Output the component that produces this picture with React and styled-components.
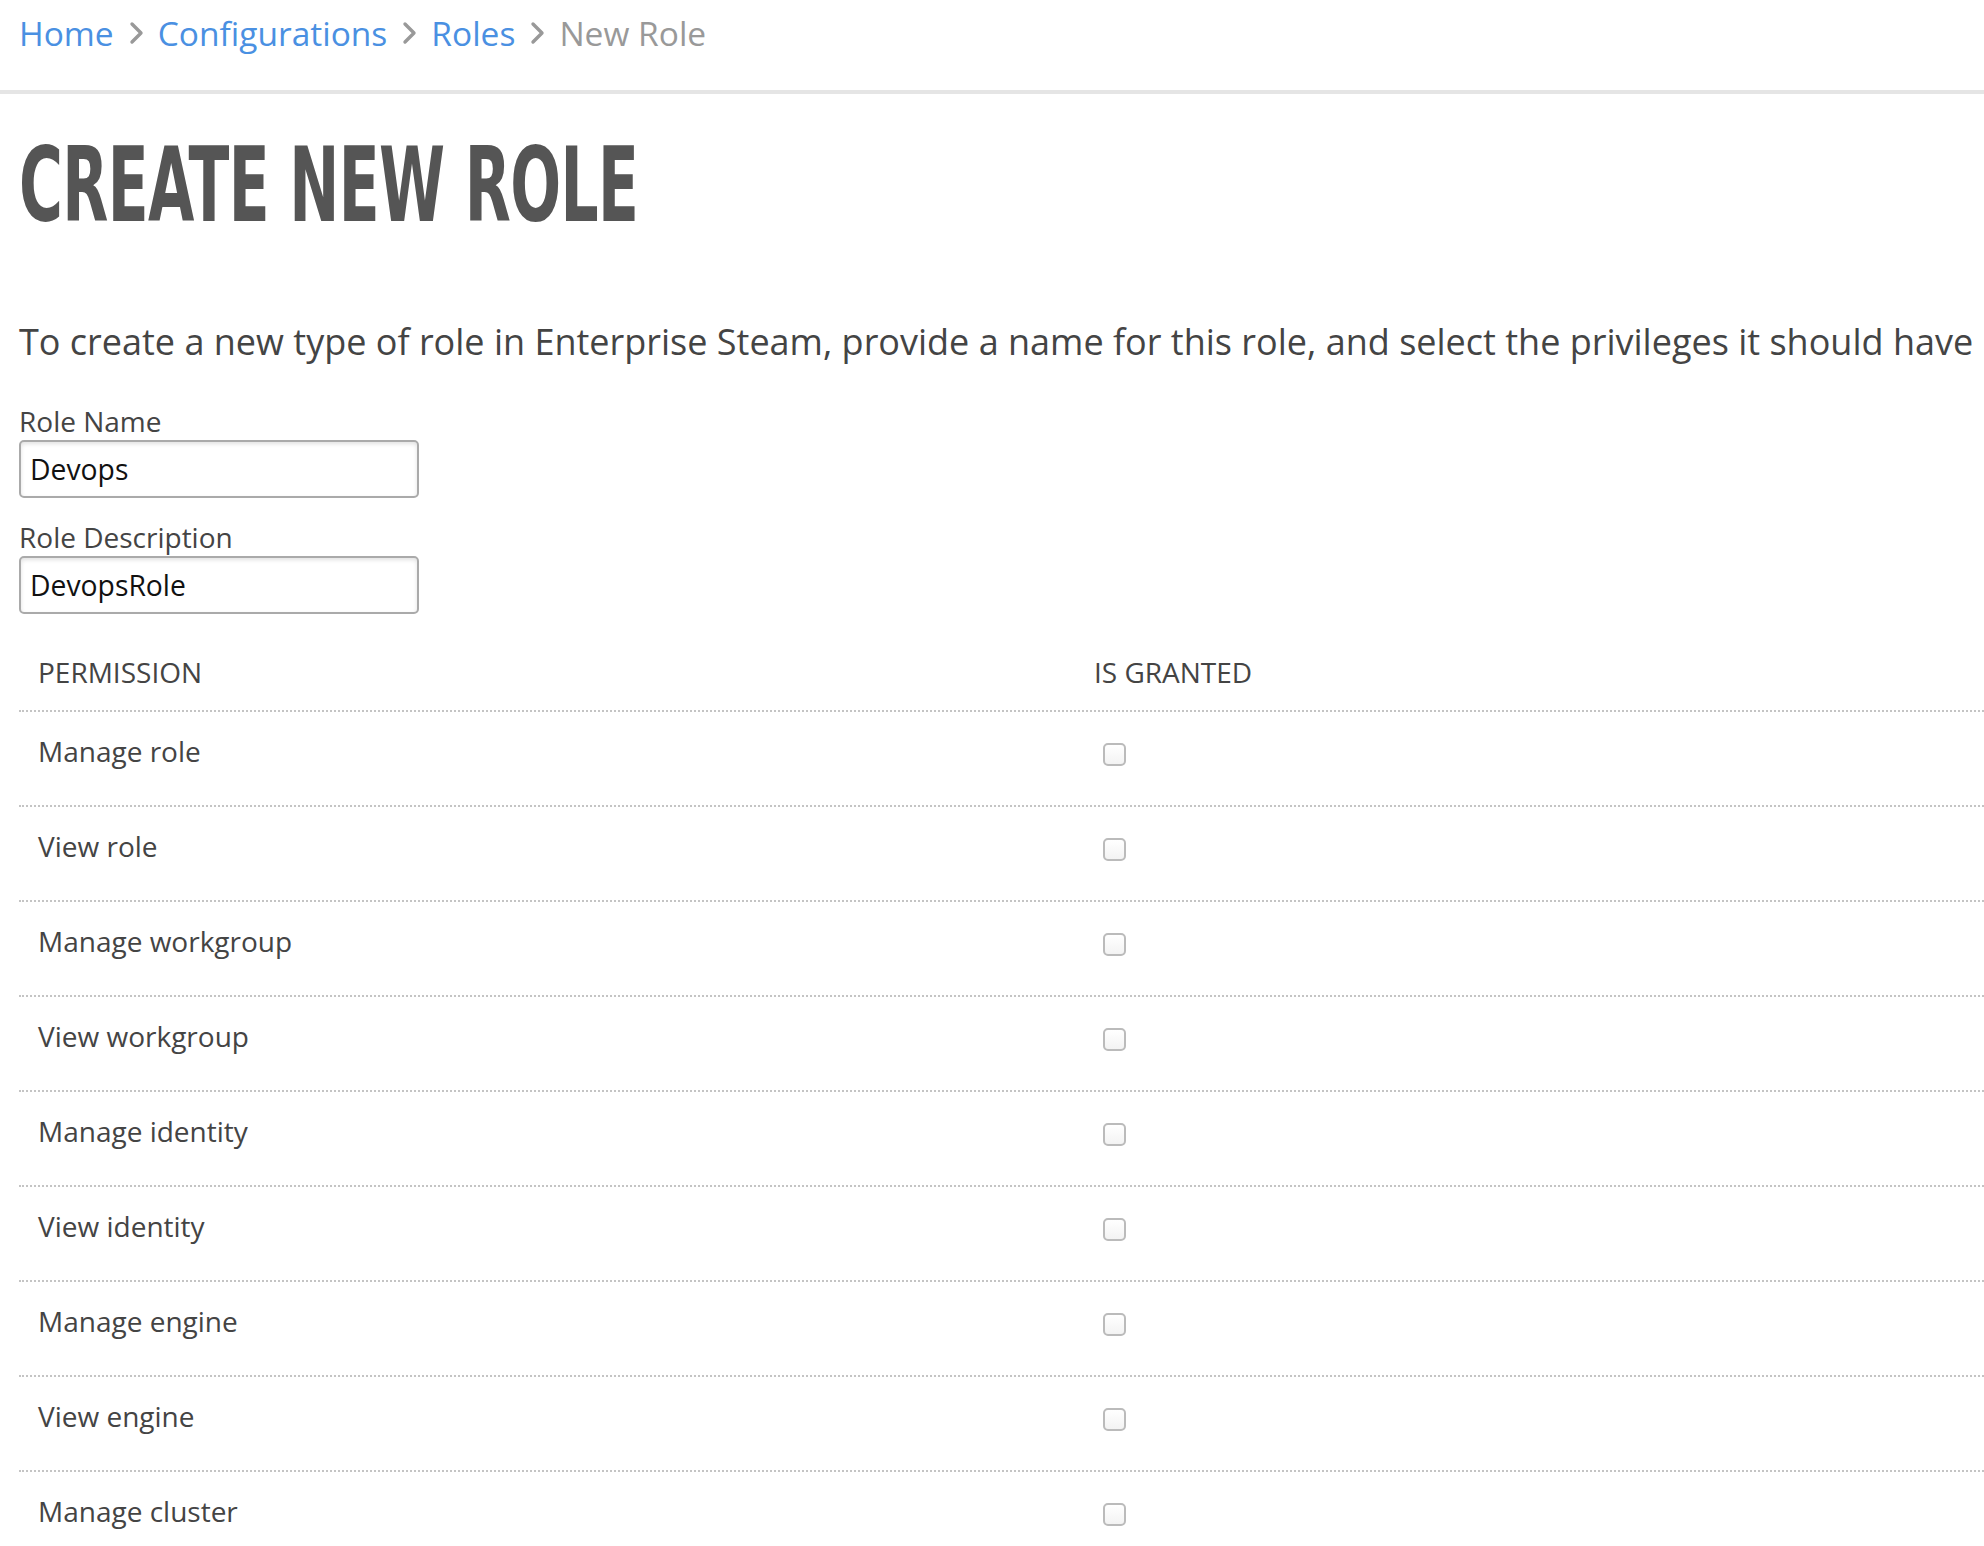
import React from 'react';
import styled, { createGlobalStyle } from 'styled-components';

const GlobalStyle = createGlobalStyle`
  html, body {
    margin: 0;
    padding: 0;
    background: #fff;
    overflow: hidden;
  }
  body {
    font-family: "Open Sans", "Noto Sans", sans-serif;
    color: #444;
  }
`;

const Page = styled.div`
  width: 1984px;
  height: 1546px;
  overflow: hidden;
`;

const Breadcrumbs = styled.nav`
  display: flex;
  align-items: center;
  gap: 10px;
  height: 94px;
  padding: 0 0 24px 19px;
  box-sizing: border-box;
  border-bottom: 4px solid #e5e5e5;
  font-size: 33.5px;
`;

const Crumb = styled.a`
  color: ${p => (p.$current ? '#999' : '#4a90e2')};
  text-decoration: none;
`;

const Chevron = styled.svg`
  width: 24px;
  height: 24px;
  flex: none;
`;

const Content = styled.main`
  padding: 0 0 0 19px;
`;

const Title = styled.h1`
  display: inline-block;
  margin: 31px 0 0;
  font-family: "Liberation Sans Narrow", "DejaVu Sans Condensed", sans-serif;
  font-weight: 700;
  font-size: 104px;
  line-height: 120px;
  color: #555;
  letter-spacing: -1px;
  transform: scaleX(0.64);
  transform-origin: left center;
`;

const Intro = styled.p`
  margin: 72px 0 0;
  font-size: 36px;
  line-height: 50px;
  color: #444;
  white-space: nowrap;
`;

const Field = styled.div`
  display: flex;
  flex-direction: column;
  margin-top: ${p => p.$top || 0}px;
`;

const Label = styled.label`
  font-size: 28px;
  line-height: 38px;
  color: #444;
`;

const Input = styled.input`
  width: 400px;
  height: 58px;
  box-sizing: border-box;
  border: 2px solid #aaa;
  border-radius: 5px;
  box-shadow: inset 0 2px 4px rgba(0, 0, 0, 0.12);
  padding: 0 9px;
  font-family: "Open Sans", "Noto Sans", sans-serif;
  font-size: 28.3px;
  color: #111;
  background: #fff;
  outline: none;
`;

const Table = styled.div`
  margin-top: 24px;
  width: 2100px;
`;

const Row = styled.div`
  display: grid;
  grid-template-columns: 1056px 1fr;
  align-items: center;
  height: ${p => (p.$head ? 72 : 95)}px;
  border-top: ${p => (p.$head ? 'none' : '2px dotted #c4c4c4')};
  box-sizing: border-box;
  padding-bottom: ${p => (p.$head ? 5 : 16)}px;
`;

const Cell = styled.div`
  padding-left: 19px;
  font-size: 28px;
  text-transform: ${p => (p.$head ? 'uppercase' : 'none')};
  color: #444;
`;

const Check = styled.span`
  display: block;
  width: 23px;
  height: 23px;
  margin: 8px 0 0 9px;
  box-sizing: border-box;
  border: 2px solid #bbb;
  border-radius: 5px;
  background: linear-gradient(#fff, #f3f3f3);
`;

const crumbs = [
  { label: 'Home' },
  { label: 'Configurations' },
  { label: 'Roles' },
  { label: 'New Role', current: true },
];

const permissions = [
  'Manage role',
  'View role',
  'Manage workgroup',
  'View workgroup',
  'Manage identity',
  'View identity',
  'Manage engine',
  'View engine',
  'Manage cluster',
];

function ChevronIcon() {
  return (
    <Chevron viewBox="0 0 24 24" fill="none" stroke="#999" strokeWidth="3.4" strokeLinecap="round" strokeLinejoin="round">
      <path d="M8 3l9 9-9 9" />
    </Chevron>
  );
}

export default function App() {
  return (
    <Page>
      <GlobalStyle />
      <Breadcrumbs>
        {crumbs.map((c, i) => (
          <React.Fragment key={c.label}>
            {i > 0 && <ChevronIcon />}
            <Crumb href="#" $current={c.current}>{c.label}</Crumb>
          </React.Fragment>
        ))}
      </Breadcrumbs>
      <Content>
        <Title>CREATE NEW ROLE</Title>
        <Intro>
          To create a new type of role in Enterprise Steam, provide a name for this role, and select the privileges it should have
        </Intro>
        <Field $top={35}>
          <Label>Role Name</Label>
          <Input defaultValue="Devops" />
        </Field>
        <Field $top={20}>
          <Label>Role Description</Label>
          <Input defaultValue="DevopsRole" />
        </Field>
        <Table>
          <Row $head>
            <Cell $head>Permission</Cell>
            <Cell $head>Is Granted</Cell>
          </Row>
          {permissions.map(p => (
            <Row key={p}>
              <Cell>{p}</Cell>
              <Cell><Check /></Cell>
            </Row>
          ))}
        </Table>
      </Content>
    </Page>
  );
}
